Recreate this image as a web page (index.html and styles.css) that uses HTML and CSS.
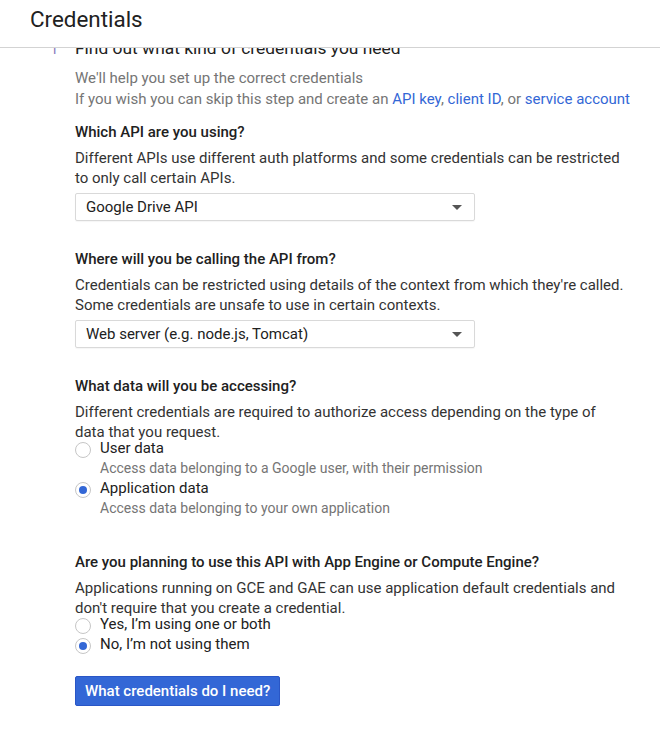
FILE: index.html
```html
<!DOCTYPE html>
<html>
<head>
<meta charset="utf-8">
<link rel="stylesheet" href="styles.css">
</head>
<body>
<header class="topbar"><h1 class="title">Credentials</h1></header>
<main class="scroller">
  <div class="content">
    <div class="step-head"><span class="step-num">1</span><h2 class="step-title">Find out what kind of credentials you need</h2></div>
    <p class="intro">We'll help you set up the correct credentials<br>If you wish you can skip this step and create an <a class="link" href="#">API key</a>, <a class="link" href="#">client ID</a>, or <a class="link" href="#">service account</a></p>

    <section class="question">
      <h3 class="q-title">Which API are you using?</h3>
      <p class="q-desc">Different APIs use different auth platforms and some credentials can be restricted to only call certain APIs.</p>
      <div class="select"><span>Google Drive API</span><span class="arrow"></span></div>
    </section>

    <section class="question">
      <h3 class="q-title">Where will you be calling the API from?</h3>
      <p class="q-desc">Credentials can be restricted using details of the context from which they're called. Some credentials are unsafe to use in certain contexts.</p>
      <div class="select"><span>Web server (e.g. node.js, Tomcat)</span><span class="arrow"></span></div>
    </section>

    <section class="question">
      <h3 class="q-title">What data will you be accessing?</h3>
      <p class="q-desc">Different credentials are required to authorize access depending on the type of data that you request.</p>
      <div class="radios">
        <div class="radio-row"><span class="radio"></span><span class="r-label">User data</span></div>
        <div class="r-sub">Access data belonging to a Google user, with their permission</div>
        <div class="radio-row"><span class="radio checked"></span><span class="r-label">Application data</span></div>
        <div class="r-sub">Access data belonging to your own application</div>
      </div>
    </section>

    <section class="question q-last">
      <h3 class="q-title">Are you planning to use this API with App Engine or Compute Engine?</h3>
      <p class="q-desc">Applications running on GCE and GAE can use application default credentials and don't require that you create a credential.</p>
      <div class="radios">
        <div class="radio-row"><span class="radio"></span><span class="r-label">Yes, I’m using one or both</span></div>
        <div class="radio-row"><span class="radio checked"></span><span class="r-label">No, I’m not using them</span></div>
      </div>
    </section>

    <button class="btn">What credentials do I need?</button>
  </div>
</main>
</body>
</html>
```
FILE: styles.css
```css
* { box-sizing: border-box; }
html, body { margin: 0; padding: 0; background: #fff; }
body {
  font-family: Roboto, "Noto Sans", Arial, sans-serif;
  color: #212121;
  width: 660px;
  height: 738px;
  overflow: hidden;
}
.topbar {
  height: 48px;
  border-bottom: 1px solid #d3d3d3;
  padding: 4px 0 0 30px;
}
.title {
  margin: 0;
  font-size: 22.4px;
  font-weight: 400;
  line-height: 31px;
  color: #212121;
}
.scroller {
  height: 690px;
  overflow: hidden;
}
.content {
  padding-left: 75px;
  width: 627px;
}
.step-head {
  display: flex;
  align-items: baseline;
  margin-top: -12px;
  margin-left: -25px;
  height: 24px;
  white-space: nowrap;
}
.step-num {
  width: 25px;
  font-size: 15px;
  color: #8e7fbf;
  line-height: 24px;
}
.step-title {
  margin: 0;
  font-size: 17.4px;
  font-weight: 400;
  line-height: 24px;
  color: #212121;
}
.intro {
  margin: 8px 0 0;
  font-size: 15px;
  line-height: 20.5px;
  color: #757575;
  white-space: nowrap;
}
.link { color: #3367d6; text-decoration: none; }
.question { margin-top: 13px; }
.question + .question { margin-top: 28px; }
.q-title {
  margin: 0;
  font-size: 15px;
  font-weight: 500;
  line-height: 20px;
  color: #212121;
}
.q-desc {
  margin: 6px 0 0;
  font-size: 15px;
  line-height: 20px;
  color: #333;
}
.select {
  margin-top: 5px;
  width: 400px;
  height: 28px;
  border: 1px solid #d9d9d9;
  border-radius: 2px;
  display: flex;
  align-items: center;
  justify-content: space-between;
  padding: 0 12px 0 10px;
  font-size: 15px;
  color: #212121;
  box-shadow: 0 1px 1px rgba(0,0,0,0.04);
}
.arrow {
  width: 0;
  height: 0;
  border-left: 5px solid transparent;
  border-right: 5px solid transparent;
  border-top: 5px solid #555;
}
.radios { margin-top: -4px; }
.radio-row {
  display: flex;
  align-items: center;
  height: 20px;
}
.radio {
  width: 16px;
  height: 16px;
  border: 1px solid #c6c6c6;
  border-radius: 50%;
  margin-right: 9px;
  margin-top: 3px;
  display: flex;
  align-items: center;
  justify-content: center;
  flex: none;
}
.radio.checked::after {
  content: "";
  width: 8px;
  height: 8px;
  border-radius: 50%;
  background: #3367d6;
}
.r-label {
  font-size: 15px;
  line-height: 20px;
  color: #212121;
}
.r-sub {
  padding-left: 25px;
  font-size: 14px;
  line-height: 20px;
  color: #757575;
}
.q-last { margin-top: 34px !important; }
.btn {
  margin-top: 22px;
  height: 30px;
  padding: 0 9px;
  background: #3367d6;
  border: 1px solid #2a56c6;
  border-radius: 2px;
  color: #fff;
  font-family: Roboto, "Noto Sans", Arial, sans-serif;
  font-size: 15px;
  font-weight: 500;
}
```
